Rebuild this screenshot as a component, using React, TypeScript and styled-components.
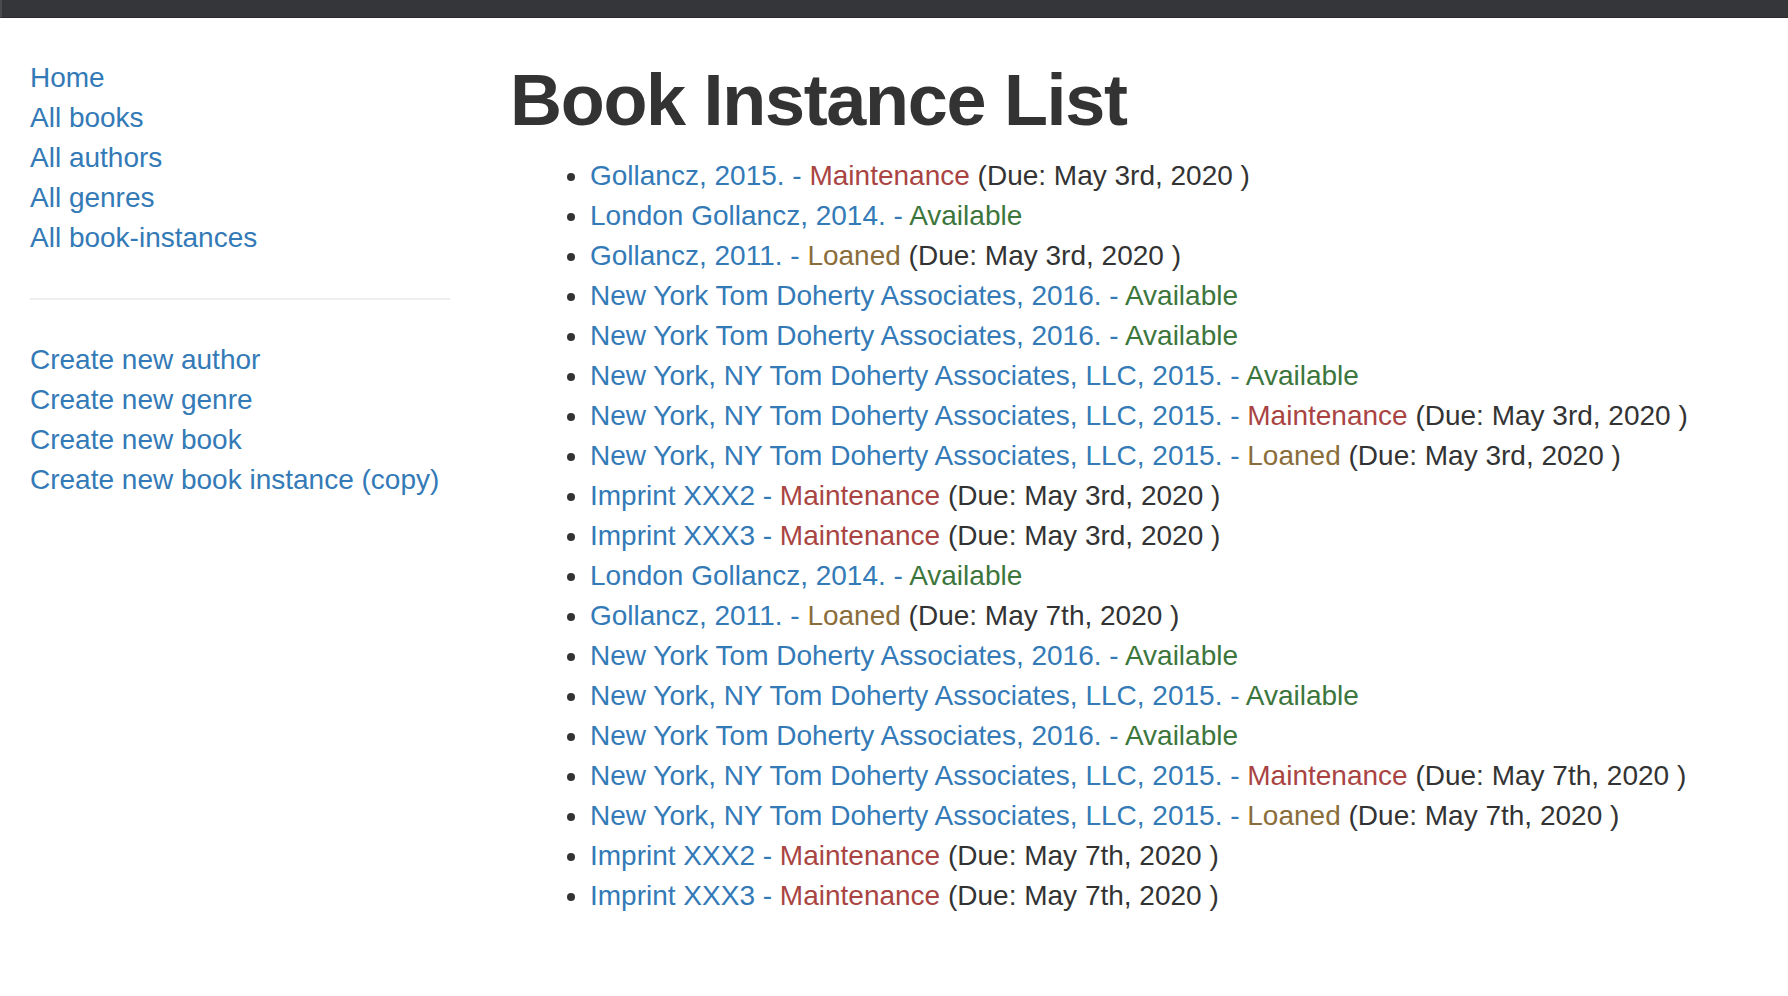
import React from "react";
import styled, { createGlobalStyle } from "styled-components";

const GlobalStyle = createGlobalStyle`
  html, body {
    margin: 0;
    padding: 0;
    background: #ffffff;
  }
  body {
    font-family: "Liberation Sans", Arial, Helvetica, sans-serif;
    font-size: 28px;
    line-height: 40px;
    color: #333333;
  }
`;

const TopBar = styled.div`
  height: 18px;
  background: #35363a;
  border-left: 2px solid #4a4b4f;
  border-bottom: 1px solid #2a2b2e;
  box-sizing: border-box;
`;

const Layout = styled.div`
  display: grid;
  grid-template-columns: 480px 1fr;
`;

const Sidebar = styled.div`
  padding: 0 30px;
`;

const NavList = styled.ul`
  list-style: none;
  padding: 0;
  margin: 40px 0 20px;
`;

const NavDivider = styled.hr`
  border: 0;
  border-top: 2px solid #eeeeee;
  margin: 40px 0;
`;

const NavItem = styled.li`
  margin: 0;
`;

const Link = styled.a`
  color: #337ab7;
  text-decoration: none;
`;

const Main = styled.div`
  padding: 0 30px;
`;

const Title = styled.h1`
  font-family: "Liberation Sans", Arial, Helvetica, sans-serif;
  font-size: 72px;
  font-weight: 700;
  line-height: 79px;
  letter-spacing: -1.3px;
  color: #333333;
  margin: 43px 0 16px;
`;

const InstanceList = styled.ul`
  margin: 0;
  padding-left: 80px;
  list-style: disc;
`;

const InstanceItem = styled.li``;

type Status = "Available" | "Maintenance" | "Loaned";

const statusColor: Record<Status, string> = {
  Available: "#3c763d",
  Maintenance: "#a94442",
  Loaned: "#8a6d3b",
};

const StatusText = styled.span<{ $status: Status }>`
  color: ${(p) => statusColor[p.$status]};
`;

const instances: { imprint: string; status: Status; due?: string }[] = [
  { imprint: "Gollancz, 2015.", status: "Maintenance", due: "May 3rd, 2020" },
  { imprint: "London Gollancz, 2014.", status: "Available" },
  { imprint: "Gollancz, 2011.", status: "Loaned", due: "May 3rd, 2020" },
  { imprint: "New York Tom Doherty Associates, 2016.", status: "Available" },
  { imprint: "New York Tom Doherty Associates, 2016.", status: "Available" },
  { imprint: "New York, NY Tom Doherty Associates, LLC, 2015.", status: "Available" },
  { imprint: "New York, NY Tom Doherty Associates, LLC, 2015.", status: "Maintenance", due: "May 3rd, 2020" },
  { imprint: "New York, NY Tom Doherty Associates, LLC, 2015.", status: "Loaned", due: "May 3rd, 2020" },
  { imprint: "Imprint XXX2", status: "Maintenance", due: "May 3rd, 2020" },
  { imprint: "Imprint XXX3", status: "Maintenance", due: "May 3rd, 2020" },
  { imprint: "London Gollancz, 2014.", status: "Available" },
  { imprint: "Gollancz, 2011.", status: "Loaned", due: "May 7th, 2020" },
  { imprint: "New York Tom Doherty Associates, 2016.", status: "Available" },
  { imprint: "New York, NY Tom Doherty Associates, LLC, 2015.", status: "Available" },
  { imprint: "New York Tom Doherty Associates, 2016.", status: "Available" },
  { imprint: "New York, NY Tom Doherty Associates, LLC, 2015.", status: "Maintenance", due: "May 7th, 2020" },
  { imprint: "New York, NY Tom Doherty Associates, LLC, 2015.", status: "Loaned", due: "May 7th, 2020" },
  { imprint: "Imprint XXX2", status: "Maintenance", due: "May 7th, 2020" },
  { imprint: "Imprint XXX3", status: "Maintenance", due: "May 7th, 2020" },
];

const mainLinks = ["Home", "All books", "All authors", "All genres", "All book-instances"];
const createLinks = [
  "Create new author",
  "Create new genre",
  "Create new book",
  "Create new book instance (copy)",
];

export default function App() {
  return (
    <>
      <GlobalStyle />
      <TopBar />
      <Layout>
        <Sidebar>
          <NavList>
            {mainLinks.map((l) => (
              <NavItem key={l}>
                <Link href="#">{l}</Link>
              </NavItem>
            ))}
          </NavList>
          <NavDivider />
          <NavList>
            {createLinks.map((l) => (
              <NavItem key={l}>
                <Link href="#">{l}</Link>
              </NavItem>
            ))}
          </NavList>
        </Sidebar>
        <Main>
          <Title>Book Instance List</Title>
          <InstanceList>
            {instances.map((it, i) => (
              <InstanceItem key={i}>
                <Link href="#">{it.imprint} - </Link>
                <StatusText $status={it.status}>{it.status}</StatusText>
                {it.due ? ` (Due: ${it.due} )` : null}
              </InstanceItem>
            ))}
          </InstanceList>
        </Main>
      </Layout>
    </>
  );
}
